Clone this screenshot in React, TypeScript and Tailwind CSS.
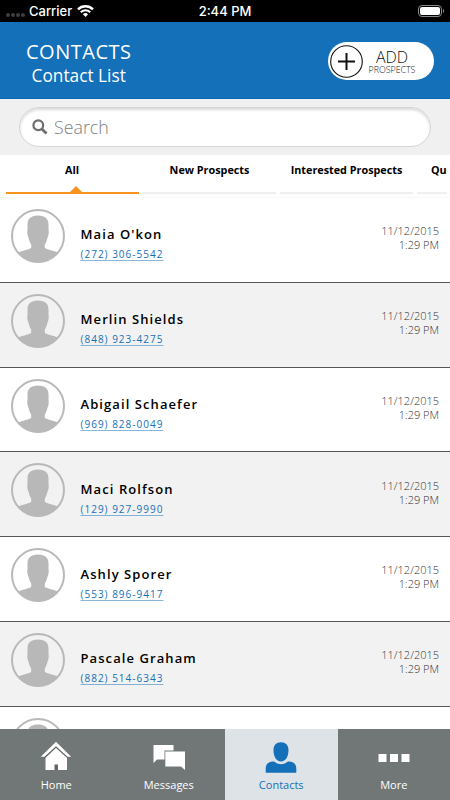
const contacts = [
  { name: "Maia O'kon", phone: "(272) 306-5542" },
  { name: "Merlin Shields", phone: "(848) 923-4275" },
  { name: "Abigail Schaefer", phone: "(969) 828-0049" },
  { name: "Maci Rolfson", phone: "(129) 927-9990" },
  { name: "Ashly Sporer", phone: "(553) 896-9417" },
  { name: "Pascale Graham", phone: "(882) 514-6343" },
  { name: "", phone: "" },
];

function StatusBar() {
  return (
    <div className="h-[22px] shrink-0 bg-black text-white grid grid-cols-3 items-center font-['Inter'] text-[13px] font-medium leading-[22px]">
      <div className="flex items-center pl-[6px]">
        <div className="flex gap-[1px] pt-[7px] mr-[4px]">
          {[0, 1, 2, 3].map((dot) => (
            <span key={dot} className="size-[4px] rounded-full bg-[#3d3d3d]" />
          ))}
        </div>
        <span>Carrier</span>
        <svg className="ml-[5px]" width="17" height="12" viewBox="0 0 17 12" fill="none" stroke="white">
          <path d="M1 4.4a10.8 10.8 0 0 1 15 0" strokeWidth="2.5" />
          <path d="M3.8 7.2a6.8 6.8 0 0 1 9.4 0" strokeWidth="2.1" />
          <path d="M8.5 12L5.9 9.3a3.8 3.8 0 0 1 5.2 0z" fill="white" stroke="none" />
        </svg>
      </div>
      <span className="text-center">2:44 PM</span>
      <svg className="justify-self-end mr-[5px]" width="27" height="12" viewBox="0 0 27 12">
        <rect x="0.5" y="0.5" width="23" height="11" rx="3.5" fill="none" stroke="#8a8a8a" />
        <rect x="2" y="2" width="20" height="8" rx="2" fill="white" />
        <path d="M25 4v4c1.6-.6 1.6-3.4 0-4z" fill="#8a8a8a" />
      </svg>
    </div>
  );
}

function Header() {
  return (
    <div className="h-[77px] shrink-0 bg-[#1470b9] border-b border-[#0567b8] flex justify-between pl-[26px] pr-[16px] text-white">
      <div className="pt-[18px]">
        <h1 className="text-[20px] leading-[24px] tracking-[0.5px]">CONTACTS</h1>
        <p className="pl-[5.5px] pt-[1px] text-[17.3px] leading-[22px]">Contact List</p>
      </div>
      <button className="mt-[20px] w-[106px] h-[38px] rounded-full bg-white flex items-center pl-[2px] text-[#111]">
        <svg width="33" height="33" viewBox="0 0 33 33" fill="none" stroke="#111">
          <circle cx="16.5" cy="16.5" r="15.8" strokeWidth="1.1" />
          <path d="M8 16.5h17M16.5 8v17" strokeWidth="2" />
        </svg>
        <div className="flex-1 pt-[2px] pr-[13px] flex flex-col items-center font-light">
          <span className="text-[16px] leading-[16px]">ADD</span>
          <span className="text-[8.8px] leading-[10px]">PROSPECTS</span>
        </div>
      </button>
    </div>
  );
}

function SearchBar() {
  return (
    <div className="h-[56px] shrink-0 bg-[#f0f0f0] px-[19px] pt-[8px]">
      <div className="h-[40px] rounded-full border border-[#d6d6d6] bg-white shadow-[inset_0px_2px_3px_0px_#00000026] flex items-center pl-[12px]">
        <svg width="16" height="16" viewBox="0 0 16 16" fill="none" stroke="#6e6e6e">
          <circle cx="6.3" cy="6.3" r="4.9" strokeWidth="2.2" />
          <path d="M9.9 9.9l4.6 4.6" strokeWidth="2.8" />
        </svg>
        <span className="ml-[6px] pt-[1px] text-[17.8px] font-light text-[#808080]">Search</span>
      </div>
    </div>
  );
}

function Tabs() {
  return (
    <div className="h-[43px] shrink-0 border-b border-[#f9f9f9] pl-[6px] pr-[3px] flex gap-[4px] overflow-hidden text-[10.8px] font-bold text-black text-center whitespace-nowrap">
      <div className="w-[133px] h-[38.5px] shrink-0 border-b-[2px] border-[#f7931e] pt-[7.4px] pr-px leading-[15px] relative">
        All
        <span className="absolute left-[63.5px] bottom-0 border-x-[6px] border-b-[6px] border-x-transparent border-b-[#f7931e]" />
      </div>
      <div className="w-[133px] h-[38.5px] shrink-0 border-b-[2px] border-[#efefef] pt-[7.4px] leading-[15px]">New Prospects</div>
      <div className="w-[133px] h-[38.5px] shrink-0 border-b-[2px] border-[#efefef] pt-[7.4px] leading-[15px]">Interested Prospects</div>
      <div className="w-[30px] h-[38.5px] shrink-0 border-b-[2px] border-[#efefef] pt-[7.4px] pl-[14px] leading-[15px] text-left">Qu</div>
    </div>
  );
}

function Avatar() {
  return (
    <svg className="shrink-0" width="54" height="54" viewBox="0 0 54 54">
      <path
        d="M27 6.5c-7.500 0-10.500 3.500-10.500 9V21c-.6 2-.1 6 1.200 8.300.5 2.700 1.500 4.700 2.500 6.400v3.300C17 41 11.500 41.700 7 43.500 11 50 19 53.500 27 53.500s16-3.500 20-10C42.500 41.700 37 41 33.800 39v-3.300c1-1.700 2-3.700 2.500-6.400 1.300-2.300 1.800-6.300 1.200-8.300v-5.500c0-5.500-3-9-10.500-9z"
        fill="#b9b8b8"
      />
      <circle cx="27" cy="27" r="26" fill="none" stroke="#b9b8b8" strokeWidth="2" />
    </svg>
  );
}

function ContactList() {
  return (
    <div className="flex-1 min-h-0 overflow-hidden">
      {contacts.map((contact) => (
        <div
          key={contact.name}
          className="h-[84.8px] border-b border-[#555] pl-[11px] pr-[11px] pt-[11px] flex even:bg-[#f2f2f2]"
        >
          <Avatar />
          {contact.name && (
            <>
              <div className="pl-[15.5px] pt-[16.4px] flex-1">
                <div className="text-[13px] leading-[18px] font-semibold tracking-[1.08px] text-black">{contact.name}</div>
                <div className="mt-[4px] text-[10px] leading-[14px] tracking-[1px] text-[#1470b9]">
                  <span className="underline decoration-[#1470b9]/50 underline-offset-2">{contact.phone}</span>
                </div>
              </div>
              <div className="pt-[15.2px] text-right text-[11px] leading-[14px] font-light text-[#333]">
                <div>11/12/2015</div>
                <div>1:29 PM</div>
              </div>
            </>
          )}
        </div>
      ))}
    </div>
  );
}

function BottomNav() {
  return (
    <div className="h-[71px] shrink-0 bg-[#717777] grid grid-cols-4 text-white text-[11px] leading-[16px]">
      <div className="pt-[12px] flex flex-col items-center">
        <svg width="32" height="32" viewBox="0 0 32 32" fill="white">
          <path d="M16 7L5.500 16.800V29h21.500V16.800z" />
          <path d="M4.500 16.500L16 5.800l11.500 10.700" fill="none" stroke="#555c5e" strokeWidth="1" />
          <path d="M16 0.800L0.800 15.800h3.700L16 5.300l11.500 10.500h3.700z" />
          <rect x="14.500" y="23.500" width="3.500" height="5.500" fill="#616869" />
        </svg>
        <span className="mt-[4px]">Home</span>
      </div>
      <div className="pt-[12px] flex flex-col items-center">
        <svg width="32" height="32" viewBox="0 0 32 32" fill="white">
          <path d="M0.500 4h20v5.500h-9V18.500H4L0.500 22z" />
          <path d="M12.300 10.500H32V29l-4-3.500H12.300z" />
        </svg>
        <span className="mt-[4px]">Messages</span>
      </div>
      <div className="pt-[12px] flex flex-col items-center bg-[#dee3e7] text-[#1470b9]">
        <svg width="32" height="32" viewBox="0 0 32 32" fill="#1470b9">
          <path d="M16 1.300c-4.700 0-7.500 3-7.500 7.700 0 6.500 2.700 11.500 7.500 11.500S23.500 15.500 23.500 9c0-4.700-2.800-7.700-7.500-7.700z" />
          <path d="M.7 31.800V27.500c0-4.500 3-7 7-7 1.500 0 2 .4 2.800 1 3 2.300 8 2.300 11 0 .8-.6 1.300-1 2.800-1 4 0 7 2.500 7 7v4.300z" />
        </svg>
        <span className="mt-[4px]">Contacts</span>
      </div>
      <div className="pt-[12px] flex flex-col items-center">
        <svg width="32" height="32" viewBox="0 0 32 32" fill="white">
          <rect x="0.500" y="13" width="8" height="8" />
          <rect x="12" y="13" width="8" height="8" />
          <rect x="23.500" y="13" width="8" height="8" />
        </svg>
        <span className="mt-[4px]">More</span>
      </div>
    </div>
  );
}

export default function App() {
  return (
    <div className="w-[450px] h-[800px] overflow-hidden bg-white flex flex-col font-['Open_Sans',sans-serif]">
      <StatusBar />
      <Header />
      <SearchBar />
      <Tabs />
      <ContactList />
      <BottomNav />
    </div>
  );
}
